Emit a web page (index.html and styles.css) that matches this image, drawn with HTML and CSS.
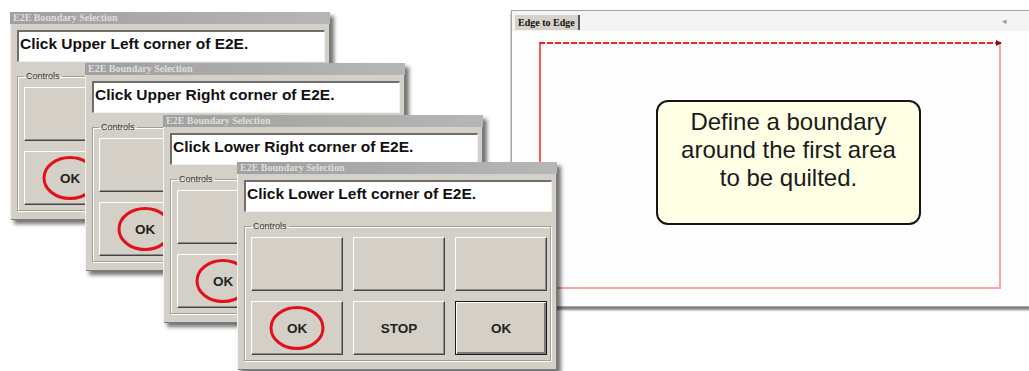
FILE: index.html
```html
<!DOCTYPE html>
<html>
<head>
<meta charset="utf-8">
<title>E2E Boundary Selection</title>
<link rel="stylesheet" href="styles.css">
</head>
<body>
<div class="stage">
  <section class="panel">
    <div class="tabstrip"><span class="tab">Edge to Edge</span><span class="tabarrow">&#9666;</span></div>
    <div class="canvas">
      <div class="bound">
        <div class="dash"></div>
        <div class="callout">Define a boundary<br>around the first area<br>to be quilted.</div>
      </div>
    </div>
  </section>

  <div class="dialog d1">
    <div class="titlebar">E2E Boundary Selection</div>
    <div class="msg">Click Upper Left corner of E2E.</div>
    <fieldset class="controls">
      <legend>Controls</legend>
      <div class="btns">
        <div class="btn"></div><div class="btn"></div><div class="btn"></div>
        <div class="btn">OK<svg class="ring" viewBox="0 0 56 45"><ellipse cx="28" cy="22.5" rx="26" ry="20.5"/></svg></div>
        <div class="btn"></div>
        <div class="btn default"></div>
      </div>
    </fieldset>
  </div>

  <div class="dialog d2">
    <div class="titlebar">E2E Boundary Selection</div>
    <div class="msg">Click Upper Right corner of E2E.</div>
    <fieldset class="controls">
      <legend>Controls</legend>
      <div class="btns">
        <div class="btn"></div><div class="btn"></div><div class="btn"></div>
        <div class="btn">OK<svg class="ring" viewBox="0 0 56 45"><ellipse cx="28" cy="22.5" rx="26" ry="20.5"/></svg></div>
        <div class="btn"></div>
        <div class="btn default"></div>
      </div>
    </fieldset>
  </div>

  <div class="dialog d3">
    <div class="titlebar">E2E Boundary Selection</div>
    <div class="msg">Click Lower Right corner of E2E.</div>
    <fieldset class="controls">
      <legend>Controls</legend>
      <div class="btns">
        <div class="btn"></div><div class="btn"></div><div class="btn"></div>
        <div class="btn">OK<svg class="ring" viewBox="0 0 56 45"><ellipse cx="28" cy="22.5" rx="26" ry="20.5"/></svg></div>
        <div class="btn"></div>
        <div class="btn default"></div>
      </div>
    </fieldset>
  </div>

  <div class="dialog d4">
    <div class="titlebar">E2E Boundary Selection</div>
    <div class="msg">Click Lower Left corner of E2E.</div>
    <fieldset class="controls">
      <legend>Controls</legend>
      <div class="btns">
        <div class="btn"></div><div class="btn"></div><div class="btn"></div>
        <div class="btn">OK<svg class="ring" viewBox="0 0 56 45"><ellipse cx="28" cy="22.5" rx="26" ry="20.5"/></svg></div>
        <div class="btn">STOP</div>
        <div class="btn default">OK</div>
      </div>
    </fieldset>
  </div>
</div>
</body>
</html>
```
FILE: styles.css
```css
html, body {
  margin: 0;
  padding: 0;
  background: #ffffff;
}
body {
  width: 1029px;
  height: 371px;
  overflow: hidden;
  font-family: "Liberation Sans", Arial, sans-serif;
}
.stage {
  position: relative;
  width: 1029px;
  height: 371px;
}

/* ---------- right panel ---------- */
.panel {
  position: absolute;
  left: 511px;
  top: 10px;
  width: 530px;
  height: 297px;
  box-sizing: border-box;
  border: 1px solid #a4a4a4;
  background: #fdfdfd;
  box-shadow: 0 3px 2px rgba(0, 0, 0, 0.5);
  display: flex;
  flex-direction: column;
}
.tabstrip {
  height: 20px;
  background: #f4f4f4;
  display: flex;
  justify-content: space-between;
  align-items: flex-start;
  padding-right: 33px;
}
.tab {
  margin-top: 4px;
  margin-left: 3px;
  height: 15px;
  line-height: 15px;
  padding: 0 3px;
  background: #d6d2ca;
  border-right: 2px solid #555555;
  font-family: "Liberation Serif", "Times New Roman", serif;
  font-weight: bold;
  font-size: 10px;
  color: #111111;
  white-space: nowrap;
}
.tabarrow {
  margin-top: 5px;
  font-size: 9px;
  line-height: 10px;
  color: #9a9a9a;
}
.canvas {
  flex: 1;
  background: #fdfdfd;
}
.bound {
  margin: 11px 0 0 27px;
  width: 462px;
  height: 247px;
  box-sizing: border-box;
  border-left: 2px solid #ff5a5a;
  border-right: 2px solid #ffa3a3;
  border-bottom: 2px solid #ffa3a3;
  display: flex;
  flex-direction: column;
  align-items: flex-start;
}
.dash {
  position: relative;
  align-self: stretch;
  margin: 0 -2px;
  height: 2px;
  background: repeating-linear-gradient(to right, #ff2020 0 6px, transparent 6px 8px);
}
.dash::after {
  content: "";
  position: absolute;
  right: -1px;
  top: -2px;
  border-left: 6px solid #8a1010;
  border-top: 3px solid transparent;
  border-bottom: 3px solid transparent;
}
.callout {
  margin: 56px 0 0 115px;
  width: 265px;
  height: 125px;
  box-sizing: border-box;
  border: 2px solid #151515;
  border-radius: 12px;
  background: #ffffe6;
  padding-top: 6px;
  text-align: center;
  font-size: 24px;
  line-height: 28px;
  color: #1a1a1a;
}

/* ---------- dialogs ---------- */
.dialog {
  position: absolute;
  width: 320px;
  height: 208px;
  background: #d4d0c8;
  box-shadow: inset 1px 1px 0 #f4f2ee, inset -1px -1px 0 #7a7a7a, 4px 4px 4px rgba(0, 0, 0, 0.55);
}
.d1 { left: 10px;  top: 12px; }
.d2 { left: 85px;  top: 63px; }
.d3 { left: 163px; top: 115px; }
.d4 { left: 237px; top: 162px; }

.titlebar {
  height: 12px;
  line-height: 12px;
  padding-left: 3px;
  background: linear-gradient(to right, #a0a0a0, #b6b6b6);
  color: #dedede;
  font-family: "Liberation Serif", "Times New Roman", serif;
  font-weight: bold;
  font-size: 10px;
  white-space: nowrap;
  overflow: hidden;
}
.msg {
  margin: 6px 5px 0 7px;
  height: 32px;
  box-sizing: border-box;
  background: #ffffff;
  border-top: 2px solid #6e6e6e;
  border-left: 2px solid #6e6e6e;
  border-right: 1px solid #f4f2ee;
  border-bottom: 1px solid #f4f2ee;
  padding: 1px 1px;
  font-weight: bold;
  font-size: 15.5px;
  line-height: 22px;
  color: #111111;
  white-space: nowrap;
  overflow: hidden;
}
.controls {
  margin: 9px 6px 0 7px;
  padding: 6px 3px 5px 6px;
  border: 1px solid #a19e97;
  box-shadow: inset 1px 1px 0 #ffffff, 1px 1px 0 #ffffff;
  min-width: 0;
}
.controls legend {
  padding: 0 2px;
  margin: 0;
  font-size: 9px;
  line-height: 10px;
  color: #333333;
}
.btns {
  display: grid;
  grid-template-columns: repeat(3, 92px);
  grid-auto-rows: 54px;
  gap: 10px;
}
.btn {
  position: relative;
  box-sizing: border-box;
  background: #d4d0c8;
  border: 1px solid;
  border-color: #ffffff #454545 #454545 #ffffff;
  box-shadow: inset -1px -1px 0 #8a8a8a;
  display: flex;
  align-items: center;
  justify-content: center;
  font-weight: bold;
  font-size: 13.5px;
  color: #222222;
}
.btn.default {
  border: 1px solid #1a1a1a;
  box-shadow: inset 1px 1px 0 #ffffff, inset -2px -2px 0 #7a7a7a;
}
.ring {
  position: absolute;
  left: 50%;
  top: 50%;
  width: 56px;
  height: 45px;
  transform: translate(-50%, -50%);
  overflow: visible;
}
.ring ellipse {
  fill: none;
  stroke: #e3101a;
  stroke-width: 3;
}
```
